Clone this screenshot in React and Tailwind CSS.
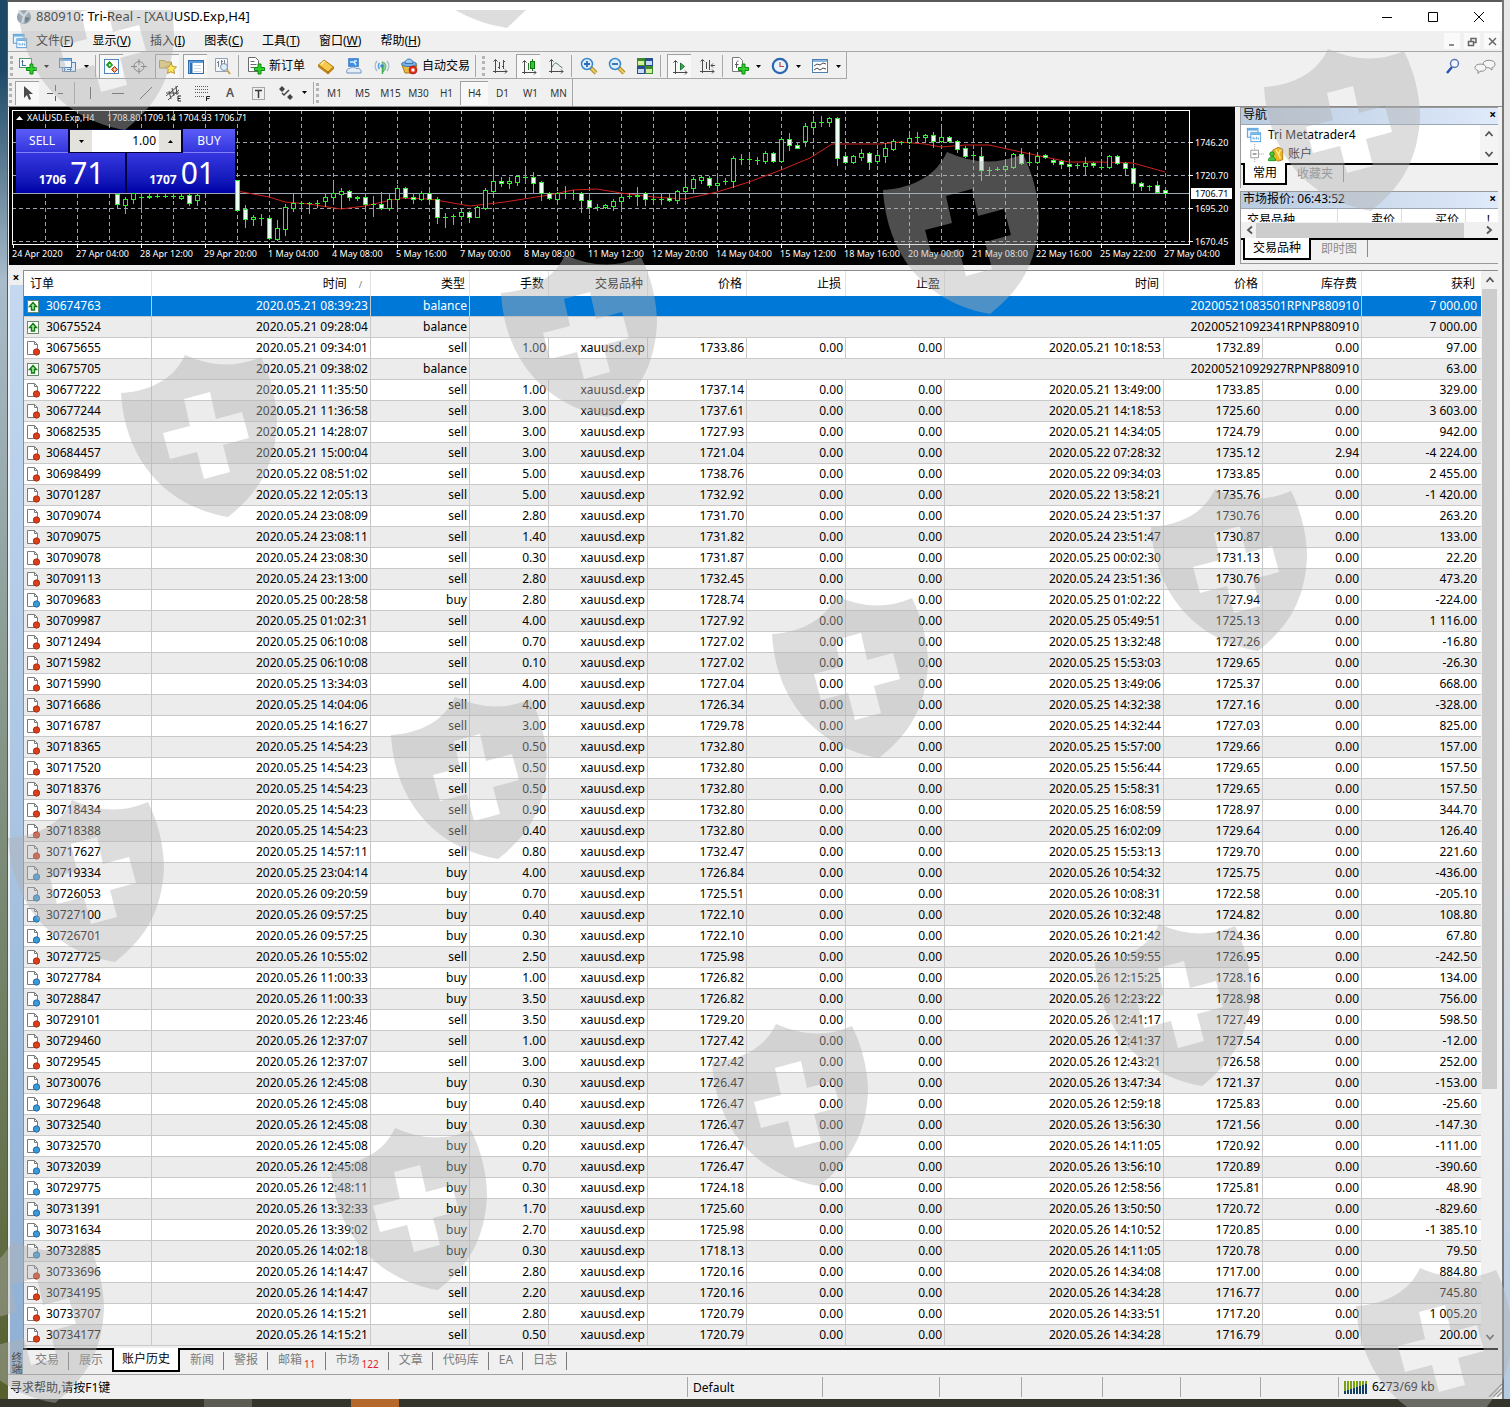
import React, { useState } from 'react';

// order, open time, type, lots, open price, close time (or comment), close price, swap, profit
const HISTORY = [
  ['30674763', '2020.05.21 08:39:23', 'balance', '', '', '20200521083501RPNP880910', '', '', '7 000.00'],
  ['30675524', '2020.05.21 09:28:04', 'balance', '', '', '20200521092341RPNP880910', '', '', '7 000.00'],
  ['30675655', '2020.05.21 09:34:01', 'sell', '1.00', '1733.86', '2020.05.21 10:18:53', '1732.89', '0.00', '97.00'],
  ['30675705', '2020.05.21 09:38:02', 'balance', '', '', '20200521092927RPNP880910', '', '', '63.00'],
  ['30677222', '2020.05.21 11:35:50', 'sell', '1.00', '1737.14', '2020.05.21 13:49:00', '1733.85', '0.00', '329.00'],
  ['30677244', '2020.05.21 11:36:58', 'sell', '3.00', '1737.61', '2020.05.21 14:18:53', '1725.60', '0.00', '3 603.00'],
  ['30682535', '2020.05.21 14:28:07', 'sell', '3.00', '1727.93', '2020.05.21 14:34:05', '1724.79', '0.00', '942.00'],
  ['30684457', '2020.05.21 15:00:04', 'sell', '3.00', '1721.04', '2020.05.22 07:28:32', '1735.12', '2.94', '-4 224.00'],
  ['30698499', '2020.05.22 08:51:02', 'sell', '5.00', '1738.76', '2020.05.22 09:34:03', '1733.85', '0.00', '2 455.00'],
  ['30701287', '2020.05.22 12:05:13', 'sell', '5.00', '1732.92', '2020.05.22 13:58:21', '1735.76', '0.00', '-1 420.00'],
  ['30709074', '2020.05.24 23:08:09', 'sell', '2.80', '1731.70', '2020.05.24 23:51:37', '1730.76', '0.00', '263.20'],
  ['30709075', '2020.05.24 23:08:11', 'sell', '1.40', '1731.82', '2020.05.24 23:51:47', '1730.87', '0.00', '133.00'],
  ['30709078', '2020.05.24 23:08:30', 'sell', '0.30', '1731.87', '2020.05.25 00:02:30', '1731.13', '0.00', '22.20'],
  ['30709113', '2020.05.24 23:13:00', 'sell', '2.80', '1732.45', '2020.05.24 23:51:36', '1730.76', '0.00', '473.20'],
  ['30709683', '2020.05.25 00:28:58', 'buy', '2.80', '1728.74', '2020.05.25 01:02:22', '1727.94', '0.00', '-224.00'],
  ['30709987', '2020.05.25 01:02:31', 'sell', '4.00', '1727.92', '2020.05.25 05:49:51', '1725.13', '0.00', '1 116.00'],
  ['30712494', '2020.05.25 06:10:08', 'sell', '0.70', '1727.02', '2020.05.25 13:32:48', '1727.26', '0.00', '-16.80'],
  ['30715982', '2020.05.25 06:10:08', 'sell', '0.10', '1727.02', '2020.05.25 15:53:03', '1729.65', '0.00', '-26.30'],
  ['30715990', '2020.05.25 13:34:03', 'sell', '4.00', '1727.04', '2020.05.25 13:49:06', '1725.37', '0.00', '668.00'],
  ['30716686', '2020.05.25 14:04:06', 'sell', '4.00', '1726.34', '2020.05.25 14:32:38', '1727.16', '0.00', '-328.00'],
  ['30716787', '2020.05.25 14:16:27', 'sell', '3.00', '1729.78', '2020.05.25 14:32:44', '1727.03', '0.00', '825.00'],
  ['30718365', '2020.05.25 14:54:23', 'sell', '0.50', '1732.80', '2020.05.25 15:57:00', '1729.66', '0.00', '157.00'],
  ['30717520', '2020.05.25 14:54:23', 'sell', '0.50', '1732.80', '2020.05.25 15:56:44', '1729.65', '0.00', '157.50'],
  ['30718376', '2020.05.25 14:54:23', 'sell', '0.50', '1732.80', '2020.05.25 15:58:31', '1729.65', '0.00', '157.50'],
  ['30718434', '2020.05.25 14:54:23', 'sell', '0.90', '1732.80', '2020.05.25 16:08:59', '1728.97', '0.00', '344.70'],
  ['30718388', '2020.05.25 14:54:23', 'sell', '0.40', '1732.80', '2020.05.25 16:02:09', '1729.64', '0.00', '126.40'],
  ['30717627', '2020.05.25 14:57:11', 'sell', '0.80', '1732.47', '2020.05.25 15:53:13', '1729.70', '0.00', '221.60'],
  ['30719334', '2020.05.25 23:04:14', 'buy', '4.00', '1726.84', '2020.05.26 10:54:32', '1725.75', '0.00', '-436.00'],
  ['30726053', '2020.05.26 09:20:59', 'buy', '0.70', '1725.51', '2020.05.26 10:08:31', '1722.58', '0.00', '-205.10'],
  ['30727100', '2020.05.26 09:57:25', 'buy', '0.40', '1722.10', '2020.05.26 10:32:48', '1724.82', '0.00', '108.80'],
  ['30726701', '2020.05.26 09:57:25', 'buy', '0.30', '1722.10', '2020.05.26 10:21:42', '1724.36', '0.00', '67.80'],
  ['30727725', '2020.05.26 10:55:02', 'sell', '2.50', '1725.98', '2020.05.26 10:59:55', '1726.95', '0.00', '-242.50'],
  ['30727784', '2020.05.26 11:00:33', 'buy', '1.00', '1726.82', '2020.05.26 12:15:25', '1728.16', '0.00', '134.00'],
  ['30728847', '2020.05.26 11:00:33', 'buy', '3.50', '1726.82', '2020.05.26 12:23:22', '1728.98', '0.00', '756.00'],
  ['30729101', '2020.05.26 12:23:46', 'sell', '3.50', '1729.20', '2020.05.26 12:41:17', '1727.49', '0.00', '598.50'],
  ['30729460', '2020.05.26 12:37:07', 'sell', '1.00', '1727.42', '2020.05.26 12:41:37', '1727.54', '0.00', '-12.00'],
  ['30729545', '2020.05.26 12:37:07', 'sell', '3.00', '1727.42', '2020.05.26 12:43:21', '1726.58', '0.00', '252.00'],
  ['30730076', '2020.05.26 12:45:08', 'buy', '0.30', '1726.47', '2020.05.26 13:47:34', '1721.37', '0.00', '-153.00'],
  ['30729648', '2020.05.26 12:45:08', 'buy', '0.40', '1726.47', '2020.05.26 12:59:18', '1725.83', '0.00', '-25.60'],
  ['30732540', '2020.05.26 12:45:08', 'buy', '0.30', '1726.47', '2020.05.26 13:56:30', '1721.56', '0.00', '-147.30'],
  ['30732570', '2020.05.26 12:45:08', 'buy', '0.20', '1726.47', '2020.05.26 14:11:05', '1720.92', '0.00', '-111.00'],
  ['30732039', '2020.05.26 12:45:08', 'buy', '0.70', '1726.47', '2020.05.26 13:56:10', '1720.89', '0.00', '-390.60'],
  ['30729775', '2020.05.26 12:48:11', 'buy', '0.30', '1724.18', '2020.05.26 12:58:56', '1725.81', '0.00', '48.90'],
  ['30731391', '2020.05.26 13:32:33', 'buy', '1.70', '1725.60', '2020.05.26 13:50:50', '1720.72', '0.00', '-829.60'],
  ['30731634', '2020.05.26 13:39:02', 'buy', '2.70', '1725.98', '2020.05.26 14:10:52', '1720.85', '0.00', '-1 385.10'],
  ['30732885', '2020.05.26 14:02:18', 'buy', '0.30', '1718.13', '2020.05.26 14:11:05', '1720.78', '0.00', '79.50'],
  ['30733696', '2020.05.26 14:14:47', 'sell', '2.80', '1720.16', '2020.05.26 14:34:08', '1717.00', '0.00', '884.80'],
  ['30734195', '2020.05.26 14:14:47', 'sell', '2.20', '1720.16', '2020.05.26 14:34:28', '1716.77', '0.00', '745.80'],
  ['30733707', '2020.05.26 14:15:21', 'sell', '2.80', '1720.79', '2020.05.26 14:33:51', '1717.20', '0.00', '1 005.20'],
  ['30734177', '2020.05.26 14:15:21', 'sell', '0.50', '1720.79', '2020.05.26 14:34:28', '1716.79', '0.00', '200.00'],
];

// x, high, body top, body bottom, low, falling (1) or rising (0)
const CANDLES = [
  [117, 193, 194, 204, 207, 1], [125, 197, 199, 205, 213, 0], [133, 193, 193, 199, 203, 0], [141, 193, 197, 197, 212, 0],
  [149, 194, 196, 197, 198, 0], [157, 194, 196, 196, 197, 0], [165, 194, 196, 196, 197, 0], [173, 193, 196, 196, 198, 0],
  [181, 194, 196, 198, 199, 0], [189, 194, 195, 203, 205, 1], [197, 193, 195, 200, 205, 0],
  [237, 180, 180, 210, 211, 1], [245, 205, 209, 219, 227, 1], [253, 215, 217, 219, 225, 0], [261, 214, 218, 218, 225, 0],
  [269, 217, 218, 238, 239, 1], [277, 220, 228, 239, 240, 0], [285, 204, 207, 229, 235, 0], [293, 194, 203, 208, 211, 0],
  [301, 201, 203, 203, 207, 0], [309, 202, 203, 203, 213, 0], [317, 200, 203, 203, 207, 0], [325, 193, 197, 201, 206, 0],
  [333, 182, 193, 197, 203, 0], [341, 188, 191, 194, 208, 0], [349, 190, 191, 197, 200, 1], [357, 196, 197, 198, 200, 1],
  [365, 197, 197, 204, 208, 1], [373, 196, 204, 204, 216, 0], [381, 192, 204, 208, 209, 1], [389, 193, 199, 208, 210, 0],
  [397, 185, 188, 199, 208, 0], [405, 187, 188, 197, 198, 1], [413, 193, 197, 199, 203, 1], [421, 191, 193, 199, 200, 0],
  [429, 190, 193, 199, 201, 1], [437, 197, 199, 217, 223, 1], [445, 213, 217, 217, 227, 0], [453, 214, 216, 216, 224, 0],
  [461, 210, 212, 216, 219, 0], [469, 211, 212, 217, 222, 1], [477, 206, 207, 217, 217, 0], [485, 188, 190, 208, 209, 0],
  [493, 170, 181, 191, 192, 0], [501, 177, 181, 183, 186, 1], [509, 177, 181, 183, 188, 0], [517, 175, 176, 182, 185, 0],
  [525, 169, 177, 177, 182, 0], [533, 172, 177, 183, 193, 1], [541, 181, 182, 193, 200, 1], [549, 192, 193, 198, 199, 1],
  [557, 192, 193, 199, 200, 0], [565, 186, 193, 193, 198, 0], [573, 190, 193, 193, 199, 0], [581, 192, 193, 200, 212, 1],
  [589, 193, 200, 207, 213, 1], [597, 204, 207, 207, 210, 0], [605, 204, 205, 207, 208, 0], [613, 199, 201, 206, 210, 0],
  [621, 194, 197, 201, 207, 0], [629, 193, 196, 196, 198, 0], [637, 187, 195, 196, 205, 0], [645, 192, 193, 199, 205, 1],
  [653, 197, 199, 199, 203, 0], [661, 194, 199, 199, 204, 0], [669, 194, 198, 200, 201, 1], [677, 190, 191, 200, 203, 0],
  [685, 176, 187, 191, 199, 0], [693, 177, 179, 188, 193, 0], [701, 176, 177, 180, 183, 0], [709, 176, 178, 185, 187, 1],
  [717, 177, 183, 185, 188, 0], [725, 178, 181, 181, 184, 0], [733, 156, 158, 181, 187, 0], [741, 154, 159, 159, 164, 0],
  [749, 154, 159, 159, 164, 0], [757, 157, 160, 160, 164, 0], [765, 151, 153, 161, 163, 0], [773, 152, 153, 161, 162, 1],
  [781, 137, 139, 161, 162, 0], [789, 133, 139, 145, 150, 1], [797, 143, 145, 148, 148, 1], [805, 123, 126, 141, 146, 0],
  [813, 116, 122, 127, 130, 0], [821, 116, 122, 122, 126, 0], [829, 117, 118, 122, 126, 0], [837, 117, 118, 158, 165, 1],
  [845, 155, 156, 162, 163, 1], [853, 155, 156, 162, 163, 0], [861, 149, 153, 157, 160, 0], [869, 152, 153, 162, 169, 1],
  [877, 150, 155, 161, 163, 0], [885, 143, 148, 156, 162, 0], [893, 139, 141, 149, 150, 0], [901, 141, 142, 142, 144, 0],
  [909, 133, 138, 142, 143, 0], [917, 132, 137, 137, 142, 0], [925, 134, 135, 137, 141, 0], [933, 132, 135, 141, 147, 1],
  [941, 127, 137, 141, 142, 0], [949, 136, 137, 141, 142, 1], [957, 140, 141, 149, 152, 1], [965, 146, 148, 156, 157, 1],
  [973, 151, 155, 155, 160, 0], [981, 147, 156, 170, 180, 1], [989, 167, 170, 170, 175, 0], [997, 167, 169, 169, 170, 0],
  [1005, 163, 166, 169, 171, 0], [1013, 153, 154, 167, 168, 0], [1021, 148, 154, 163, 164, 1], [1029, 152, 162, 162, 165, 0],
  [1037, 152, 156, 162, 163, 0], [1045, 154, 155, 157, 158, 1], [1053, 159, 160, 162, 164, 1], [1061, 160, 161, 164, 168, 1],
  [1069, 163, 164, 166, 171, 1], [1077, 163, 165, 165, 168, 0], [1085, 157, 163, 166, 175, 0], [1093, 162, 163, 165, 167, 1],
  [1101, 162, 167, 167, 169, 0], [1109, 155, 156, 167, 168, 0], [1117, 155, 156, 163, 164, 1], [1125, 162, 163, 168, 175, 1],
  [1133, 164, 168, 183, 189, 1], [1141, 182, 183, 186, 190, 1], [1149, 185, 186, 186, 190, 0], [1157, 181, 185, 192, 193, 1],
  [1165, 189, 190, 193, 197, 1],
];

const AVERAGE =
  '237,191 269,197 285,202 309,204 341,209 365,206 400,198 430,199 470,206 505,202 530,198 549,195 573,190 597,189 621,193 653,197 685,199 717,192 749,182 781,170 810,158 832,144 880,144 900,142 925,144 941,147 965,145 989,145 1021,152 1045,157 1069,162 1100,162 1133,163 1165,172';

const DATES = [
  '24 Apr 2020', '27 Apr 04:00', '28 Apr 12:00', '29 Apr 20:00', '1 May 04:00', '4 May 08:00', '5 May 16:00',
  '7 May 00:00', '8 May 08:00', '11 May 12:00', '12 May 20:00', '14 May 04:00', '15 May 12:00', '18 May 16:00',
  '20 May 00:00', '21 May 08:00', '22 May 16:00', '25 May 22:00', '27 May 04:00',
];

const PRICES = [['1746.20', 142], ['1720.70', 175], ['1695.20', 208], ['1670.45', 241]];

const SHIELDS = [
  [18, 6], [1264, 87], [883, 190], [501, 293], [121, 393], [1151, 527], [772, 634], [391, 735], [8, 838],
  [1095, 962], [712, 1062], [331, 1166], [-52, 1279], [1356, 1306],
];

const MENUS = [['文件', 'F'], ['显示', 'V'], ['插入', 'I'], ['图表', 'C'], ['工具', 'T'], ['窗口', 'W'], ['帮助', 'H']];

const Icon = ({ children, size = 'w-[18px] h-[18px]' }) => (
  <svg viewBox="0 0 18 18" className={`${size} shrink-0`} fill="none" aria-hidden="true">
    {children}
  </svg>
);

const Plus = () => <path d="M11 7h3v3.500h3.500v3H14V17h-3v-3.500H7.500v-3H11z" fill="#2fd02f" stroke="#0b8a0b" />;
const Axes = () => <path d="M4.500 3v13M2.500 4.500l2-2 2 2M2 14.500h14M14 12.500l2 2-2 2" stroke="#4a4a4a" />;

const NewChartIcon = () => (
  <Icon>
    <rect x="0.500" y="1.500" width="12" height="9" fill="#fff" stroke="#4a9a6a" />
    <path d="M3.500 3v6M2.500 4.500l1-1 1 1M3 8.500h4" stroke="#3c6e9c" />
    <Plus />
  </Icon>
);
const ProfilesIcon = () => (
  <Icon>
    <rect x="5.500" y="5.500" width="11" height="9" fill="#dceaf8" stroke="#4a86c0" />
    <rect x="0.500" y="1.500" width="12" height="9" fill="#f4f8fc" stroke="#4a86c0" />
    <path d="M1 3h11" stroke="#7fb0de" strokeWidth="2" />
    <path d="M3.500 11v3.500h8v-3.500M8 12.500h5" stroke="#6b8fb5" />
  </Icon>
);
const MarketIcon = () => (
  <Icon>
    <rect x="1.500" y="1.500" width="14" height="14" fill="#fff" stroke="#4a86c0" />
    <path d="M6.500 3.500L9.500 7 6.500 10 3.500 7z" fill="#20b020" stroke="#0d7a0d" />
    <path d="M11.500 8.500l3 3-3 3-3-3z" fill="#f09040" stroke="#b03010" />
    <path d="M6 6h1.500v2H6z" fill="#e0ffe0" />
    <path d="M11 10.500h1.500v2H11z" fill="#fff0e0" />
  </Icon>
);
const TargetIcon = () => (
  <Icon>
    <circle cx="9" cy="9.500" r="5" stroke="#707070" />
    <path d="M9 2v6M9 11v6M1 9.500h6M11 9.500h6" stroke="#707070" />
  </Icon>
);
const StarsIcon = () => (
  <Icon>
    <path d="M.5 2.500h5l1 1.500h6v6h-12z" fill="#f3d878" stroke="#b8942c" />
    <path d="M12 5l1.700 3.500 3.800.5-2.700 2.700.7 3.800-3.500-1.800-3.500 1.800.7-3.800L6.500 9l3.800-.5z" fill="#ffe65a" stroke="#b8942c" />
  </Icon>
);
const TerminalIcon = () => (
  <Icon>
    <rect x="1.500" y="2.500" width="15" height="13" fill="#fff" stroke="#2f6db0" />
    <path d="M2 4h14" stroke="#5d9ad8" strokeWidth="2" />
    <path d="M4 5v10" stroke="#2f6db0" strokeWidth="3" />
    <path d="M7 7.500h7M7 10.500h7M7 13.500h7" stroke="#c9d9ea" />
  </Icon>
);
const TesterIcon = () => (
  <Icon>
    <path d="M1.500 1.500h12v13h-12z" fill="#f7f7f7" stroke="#8ea3b8" />
    <path d="M4.500 4v6M3 5.500h1.500M7.500 3v6M7.500 4.500H9M10.500 3v5" stroke="#6d7f90" />
    <circle cx="10" cy="10" r="3.500" fill="#d8ebfa" fillOpacity="0.8" stroke="#7a94ad" />
    <path d="M13 13l3 4" stroke="#d1a23c" strokeWidth="2" />
  </Icon>
);
const OrderIcon = () => (
  <Icon>
    <path d="M1.500 .500h7l3 3v11h-10z" fill="#fff" stroke="#6a6a6a" />
    <path d="M3.500 4.500h4M3.500 7.500h6M3.500 10.500h4" stroke="#6a6a6a" />
    <Plus />
  </Icon>
);
const GoldIcon = () => (
  <Icon>
    <path d="M1.500 8L7 3l9.500 7-5.500 5z" fill="#f6c94c" stroke="#b27a10" />
    <path d="M1.500 8v2L11 17v-2zM11 15v2l5.500-5v-2z" fill="#c78a1a" stroke="#a66b0c" strokeWidth="0.600" />
    <path d="M4 7.500l3.500-3.500" stroke="#fff0a8" strokeWidth="1.500" />
  </Icon>
);
const ComputerIcon = () => (
  <Icon>
    <path d="M3.500 1.500h10v8h-10z" fill="#3b8ee8" stroke="#5b8fc8" />
    <path d="M5 5h4l2 3M9 4h3" stroke="#d8efff" strokeWidth="1.500" />
    <path d="M2 16c-1-3 1-5 3-4.500 1-2 5-2 6 0 3-1 6 1.500 5 4.500z" fill="#e4ecf5" stroke="#6f94bf" />
  </Icon>
);
const SignalIcon = () => (
  <Icon>
    <path d="M4 4a8 8 0 0 0 0 10M14 4a8 8 0 0 1 0 10" stroke="#a7bfc8" strokeWidth="1.500" />
    <path d="M6.500 6a5 5 0 0 0 0 6" stroke="#5a9be0" strokeWidth="1.500" />
    <path d="M9 5c5 0 5 7 1 10V9z" fill="#8fd09a" stroke="#5fae6b" />
    <circle cx="9" cy="9" r="1.800" fill="#2f8ed0" />
    <path d="M9.500 10v7" stroke="#3fae4b" strokeWidth="1.500" />
  </Icon>
);
const AutoIcon = () => (
  <Icon>
    <path d="M2 8l3 8h8l4-8z" fill="#e8b93c" stroke="#a67c15" />
    <ellipse cx="9" cy="7" rx="7.500" ry="2.500" fill="#7ab4ea" stroke="#3c78b4" />
    <path d="M5 6.500c0-6 8-6 8 0z" fill="#9fcbf2" stroke="#3c78b4" />
    <circle cx="13" cy="13" r="4" fill="#dd2c1c" stroke="#a01508" strokeWidth="0.600" />
    <rect x="11.500" y="11.500" width="3" height="3" fill="#fff" />
  </Icon>
);
const BarsIcon = () => (
  <Icon><Axes /><path d="M8.500 5v7M7 10.500h1.500M12.500 3v9M12.500 4.500H14M11 9.500h1.500" stroke="#4a4a4a" /></Icon>
);
const CandleIcon = () => (
  <Icon>
    <Axes />
    <path d="M8.500 5v7M12.500 1v12" stroke="#2c7a2c" />
    <rect x="10.500" y="3.500" width="4" height="7" fill="#35c635" stroke="#0d7a0d" />
  </Icon>
);
const LineIcon = () => (
  <Icon><Axes /><path d="M4.500 11c3-6 5-6 7-3l4 3" stroke="#4a7a5a" /></Icon>
);
const ZoomIcon = ({ plus }) => (
  <Icon>
    <path d="M11 11l5 5" stroke="#b48a24" strokeWidth="4" />
    <path d="M11 11l5 5" stroke="#e9cf6c" strokeWidth="2" />
    <circle cx="7" cy="7" r="5.500" fill="#d9edfb" stroke="#3a86cc" strokeWidth="1.500" />
    <path d={plus ? 'M4 7h6M7 4v6' : 'M4 7h6'} stroke="#2a6db4" strokeWidth="1.800" />
  </Icon>
);
const TileIcon = () => (
  <Icon>
    <rect x="1" y="1" width="8" height="8" fill="#3c8a2c" /><rect x="9" y="1" width="8" height="8" fill="#2a4c90" />
    <rect x="1" y="9" width="8" height="8" fill="#2a4c90" /><rect x="9" y="9" width="8" height="8" fill="#3c8a2c" />
    <path d="M2 4h6v4H2zM10 12h6v4h-6z" fill="#d4eeA0" />
    <path d="M10 4h6v4h-6zM2 12h6v4H2z" fill="#c4dcf8" />
  </Icon>
);
const ScrollIcon = () => <Icon><Axes /><path d="M9.500 5v7l4-3.500z" fill="#2fae4f" stroke="#1e7a36" /></Icon>;
const ShiftIcon = () => <Icon><Axes /><path d="M11.500 3v10M17 8.500h-4M15 6.500l-2 2 2 2M8.500 5v7" stroke="#4a4a4a" /></Icon>;
const IndicatorIcon = () => (
  <Icon>
    <path d="M1.500 .500h7l3 3v11h-10z" fill="#fff" stroke="#7a7a7a" />
    <path d="M7.500 4c-2 0-2 1-2 3v4M4 7.500h3.500" stroke="#5a5a5a" />
    <Plus />
  </Icon>
);
const ClockIcon = () => (
  <Icon>
    <circle cx="9" cy="9" r="7.200" fill="#e9f4fd" stroke="#2a67b0" strokeWidth="2.200" />
    <path d="M9 5v4.500h4" stroke="#c04a3a" strokeWidth="1.200" />
  </Icon>
);
const TemplateIcon = () => (
  <Icon>
    <rect x="1.500" y="2.500" width="15" height="13" fill="#fff" stroke="#4a7fb0" />
    <path d="M2 4h14" stroke="#8ab4de" strokeWidth="2" />
    <path d="M3 9l3-2 3 1 3-2 3 1M3 13l3-2 3 2 3-2 3 1" stroke="#4a4a4a" />
  </Icon>
);
const WindowsIcon = () => (
  <Icon size="w-4 h-4">
    <rect x="1.500" y="1.500" width="12" height="10" fill="#e8f3fc" stroke="#4a96d4" />
    <path d="M2 3h11" stroke="#6ab0e4" strokeWidth="2" />
    <rect x="5.500" y="6.500" width="11" height="10" fill="#fff" stroke="#4a96d4" />
    <path d="M6 8h10" stroke="#6ab0e4" strokeWidth="2" />
    <path d="M8 14v-3M10 14v-2M12 14v-3M14 14v-2" stroke="#4a96d4" />
  </Icon>
);

const DocIcon = ({ type }) => {
  if (type === 'balance') {
    return (
      <svg viewBox="0 0 14 16" className="w-[14px] h-4 shrink-0" fill="none" aria-hidden="true">
        <rect x="1.500" y="2.500" width="11" height="12" fill="#fff" stroke="#6a8a6a" />
        <path d="M7 4.500l3.500 4h-2V12h-3V8.500h-2z" fill="#a8e8a0" stroke="#127a12" strokeWidth="1.400" />
      </svg>
    );
  }
  return (
    <svg viewBox="0 0 14 16" className="w-[14px] h-4 shrink-0" fill="none" aria-hidden="true">
      <path d="M1.500 1.500h7l3 3v10h-10z" fill="#fff" stroke="#7a7a7a" />
      <path d="M8.500 1.500v3h3" stroke="#7a7a7a" />
      <circle cx="10.500" cy="12" r="3.200" fill={type === 'sell' ? '#d8401c' : '#3a9ad8'} stroke={type === 'sell' ? '#9c2408' : '#1a5c94'} strokeWidth="0.800" />
    </svg>
  );
};

const ToolButton = ({ label, active, children }) => (
  <button type="button" aria-label={label} className="flex w-7 h-6 items-center justify-center">
    <span className={`flex w-6 h-6 items-center justify-center ${active ? 'border-t border-l border-[#a0a0a0] bg-[#f8f8f8]' : ''}`}>
      {children}
    </span>
  </button>
);

const Caret = ({ label }) => (
  <button type="button" aria-label={label} className="flex w-2 h-6 items-center justify-center">
    <svg viewBox="0 0 5 3" className="w-[5px] h-[3px]" aria-hidden="true"><path d="M0 0h5L2.500 3z" fill="#000" /></svg>
  </button>
);

const Sep = () => <span className="w-px h-[22px] mx-px bg-[#a8a8a8]" />;
const Grip = () => <span className="w-[3px] h-5 mx-px border-l-[3px] border-dotted border-[#b4b4b4]" />;

const Toolbar = () => (
  <div className="flex h-[27px]">
    <div className="flex items-center pt-0.5 pl-px pr-1 border-r border-b border-[#a8a8a8]">
      <Grip />
      <ToolButton label="新图表"><NewChartIcon /></ToolButton>
      <Caret label="新图表列表" />
      <span className="w-1" />
      <ToolButton label="配置文件"><ProfilesIcon /></ToolButton>
      <Caret label="配置文件列表" />
      <span className="w-1" />
      <Sep />
      <ToolButton label="市场报价" active><MarketIcon /></ToolButton>
      <ToolButton label="数据窗口"><TargetIcon /></ToolButton>
      <ToolButton label="导航" active><StarsIcon /></ToolButton>
      <ToolButton label="终端" active><TerminalIcon /></ToolButton>
      <ToolButton label="策略测试"><TesterIcon /></ToolButton>
      <Sep />
      <button type="button" className="flex items-center gap-1 px-[7px] text-[12px]"><OrderIcon />新订单</button>
      <ToolButton label="编辑器"><GoldIcon /></ToolButton>
      <ToolButton label="主机"><ComputerIcon /></ToolButton>
      <ToolButton label="信号"><SignalIcon /></ToolButton>
      <button type="button" className="flex items-center gap-1 px-1 text-[12px]"><AutoIcon />自动交易</button>
      <Sep />
      <span className="w-1" />
      <Grip />
      <ToolButton label="柱状图"><BarsIcon /></ToolButton>
      <ToolButton label="蜡烛图" active><CandleIcon /></ToolButton>
      <ToolButton label="折线图"><LineIcon /></ToolButton>
      <Sep />
      <span className="w-0.5" />
      <ToolButton label="放大"><ZoomIcon plus /></ToolButton>
      <ToolButton label="缩小"><ZoomIcon /></ToolButton>
      <ToolButton label="平铺"><TileIcon /></ToolButton>
      <Sep />
      <span className="w-[3px]" />
      <ToolButton label="自动滚动" active><ScrollIcon /></ToolButton>
      <ToolButton label="图表平移"><ShiftIcon /></ToolButton>
      <Sep />
      <span className="w-0.5" />
      <ToolButton label="指标"><IndicatorIcon /></ToolButton>
      <Caret label="指标列表" />
      <span className="w-1" />
      <ToolButton label="周期"><ClockIcon /></ToolButton>
      <Caret label="周期列表" />
      <span className="w-1" />
      <ToolButton label="模板"><TemplateIcon /></ToolButton>
      <Caret label="模板列表" />
    </div>
    <div className="ml-auto flex items-center gap-3 pr-1.5">
      <button type="button" aria-label="搜索">
        <Icon>
          <path d="M8 10l-5 6" stroke="#2c52b0" strokeWidth="2.500" />
          <circle cx="10.500" cy="6.500" r="4" fill="#f2f6fc" stroke="#5a78b8" strokeWidth="1.500" />
        </Icon>
      </button>
      <button type="button" aria-label="聊天">
        <svg viewBox="0 0 22 18" className="w-[22px] h-[18px]" fill="none" aria-hidden="true">
          <path d="M9 7c0-5 12-5 12 0 0 2-1 3-3 3.500V13l-3-2.300C11 11 9 9.500 9 7z" fill="#f4f4f4" stroke="#8c8c8c" />
          <path d="M1 10.500c0-4.500 11-4.500 11 0 0 3-3 4-6 3.700L4 16.500v-3c-2-.6-3-1.600-3-3z" fill="#f4f4f4" stroke="#8c8c8c" />
        </svg>
      </button>
    </div>
  </div>
);

const DrawingBar = () => {
  const [frame, setFrame] = useState('H4');
  return (
    <div className="flex h-7 border-b border-[#8c8c8c]">
      <div className="flex items-center border-r border-[#a8a8a8]">
        <Grip />
        <ToolButton label="光标" active><Icon><path d="M5 2v12l3-3 2 5 2-1-2-5h4z" fill="#4a4a4a" /></Icon></ToolButton>
        <ToolButton label="十字线"><Icon><path d="M9.500 1v6M9.500 12v5M1 9.500h6M12 9.500h5" stroke="#5a5a5a" /></Icon></ToolButton>
        <span className="w-1" />
        <Sep />
        <ToolButton label="垂直线"><Icon><path d="M9.500 3v12" stroke="#5a5a5a" /></Icon></ToolButton>
        <ToolButton label="水平线"><Icon><path d="M3 9.500h12" stroke="#5a5a5a" /></Icon></ToolButton>
        <ToolButton label="趋势线"><Icon><path d="M3 15L15 3" stroke="#5a5a5a" /></Icon></ToolButton>
        <ToolButton label="通道">
          <Icon>
            <path d="M1 12L13 2M3 16L14 6M4 7l2 8M7 4l2 8M11 2l1 9M1 9h13" stroke="#4a4a4a" />
            <path d="M16 12h-3v5h3M13 14.500h2.500" stroke="#222" />
          </Icon>
        </ToolButton>
        <ToolButton label="斐波那契">
          <Icon>
            <path d="M2 2.500h13M2 5.500h13M2 8.500h13M2 12.500h10" stroke="#5a5a5a" strokeDasharray="1 1" />
            <path d="M17 12.500h-3.500V17M14 14.500h2.500" stroke="#222" />
          </Icon>
        </ToolButton>
        <ToolButton label="文字"><span className="text-[12px] font-semibold text-[#555]">A</span></ToolButton>
        <ToolButton label="标签">
          <Icon>
            <rect x="3.500" y="3.500" width="12" height="12" stroke="#5a5a5a" strokeDasharray="1 1" />
            <path d="M6 6.500h7M9.500 6.500V14" stroke="#3a3a3a" strokeWidth="1.500" />
          </Icon>
        </ToolButton>
        <ToolButton label="箭头">
          <Icon>
            <path d="M2 5l3-3 3 3-3 3zM10 13l3-3 3 3-3 3z" fill="#444" />
            <path d="M5 9l2 2 5-5" stroke="#444" strokeWidth="1.500" />
          </Icon>
        </ToolButton>
        <Caret label="箭头列表" />
        <span className="w-1" />
        <Sep />
        <Grip />
        {['M1', 'M5', 'M15', 'M30', 'H1', 'H4', 'D1', 'W1', 'MN'].map((f) => (
          <button
            key={f}
            type="button"
            onClick={() => setFrame(f)}
            className={`w-7 h-6 border-t border-l text-center text-[10px] text-[#333] ${f === frame ? 'border-[#a0a0a0] bg-[#f8f8f8]' : 'border-transparent'}`}
          >
            {f}
          </button>
        ))}
      </div>
    </div>
  );
};

const Chart = () => (
  <svg viewBox="9 107 1226 158" className="block w-full h-auto bg-black" fill="none">
    <g stroke="#9aa3ad" strokeDasharray="4 3" shapeRendering="crispEdges">
      {Array.from({ length: 36 }, (_, i) => (
        <path key={i} d={`M${45.5 + i * 32} 110V244`} />
      ))}
      {PRICES.map(([p, y]) => (
        <path key={p} d={`M12 ${y + 0.5}H1189`} />
      ))}
    </g>
    <path d="M12 193.500H1189" stroke="#9aa9b8" />
    <polyline points={AVERAGE} stroke="#d0221e" />
    <g shapeRendering="crispEdges">
      {CANDLES.map(([x, high, top, bottom, low, down]) => (
        <g key={x}>
          <path d={`M${x + 0.5} ${high}V${low + 1}`} stroke="#2cf02c" />
          {top === bottom ? (
            <path d={`M${x - 2} ${top + 0.5}h5`} stroke="#2cf02c" />
          ) : (
            <rect x={x - 1.5} y={top + 0.5} width="4" height={bottom - top} fill={down ? '#eafff0' : '#000'} stroke="#2cf02c" />
          )}
        </g>
      ))}
      <path d="M12.500 110.500H1189.500V244.500H12.500z" stroke="#fff" />
      {PRICES.map(([p, y]) => (
        <path key={p} d={`M1189 ${y + 0.5}h4`} stroke="#fff" />
      ))}
      {DATES.map((d, i) => (
        <path key={d} d={`M${13.5 + i * 64} 244v4`} stroke="#fff" />
      ))}
    </g>
    <g fill="#fff" className="text-[9px]">
      {DATES.map((d, i) => (
        <text key={d} x={12 + i * 64} y="257">{d}</text>
      ))}
      {PRICES.map(([p, y]) => (
        <text key={p} x="1195" y={y + 4}>{p}</text>
      ))}
      <path d="M16 120l3.500-4 3.500 4z" />
      <text x="27" y="121">XAUUSD.Exp,H4</text>
      <text x="107" y="121">1708.80 1709.14 1704.93 1706.71</text>
      <rect x="1191" y="188" width="41" height="11" />
      <text x="1195" y="197" fill="#000">1706.71</text>
    </g>
  </svg>
);

const OneClick = () => (
  <div className="absolute left-[7px] top-[22px] flex w-[219px] flex-col bg-[#00003c] text-white">
    <div className="flex justify-between">
      <button type="button" className="w-[52px] h-6 border-b border-[#8080ff] bg-linear-to-b from-[#5c5cf8] to-[#3434dc] text-[12px]">SELL</button>
      <div className="flex h-[22px] w-[111px] mt-px bg-[#e4e2dc] text-black">
        <button type="button" aria-label="减少手数" className="flex w-[22px] items-center justify-center">
          <svg viewBox="0 0 5 3" className="w-[5px] h-[3px]"><path d="M0 0h5L2.500 3z" fill="#000" /></svg>
        </button>
        <input aria-label="手数" defaultValue="1.00" className="w-0 flex-1 bg-white px-[3px] text-right text-[12px]" />
        <button type="button" aria-label="增加手数" className="flex w-[22px] items-center justify-center">
          <svg viewBox="0 0 5 3" className="w-[5px] h-[3px]"><path d="M0 3h5L2.500 0z" fill="#000" /></svg>
        </button>
      </div>
      <button type="button" className="w-[52px] h-6 border-b border-[#8080ff] bg-linear-to-b from-[#5c5cf8] to-[#3434dc] text-[12px]">BUY</button>
    </div>
    <div className="grid grid-cols-2 gap-0.5">
      {[['1706', '71'], ['1707', '01']].map(([big, pips]) => (
        <button key={big} type="button" className="flex h-10 items-baseline justify-end gap-1 bg-linear-to-b from-[#3636e0] to-[#0000a8] pr-5">
          <span className="text-[12px] font-bold">{big}</span>
          <span className="text-[30px] leading-10">{pips}</span>
        </button>
      ))}
    </div>
  </div>
);

const Chevron = ({ d }) => (
  <svg viewBox="0 0 10 10" className="w-[10px] h-[10px]" fill="none" aria-hidden="true"><path d={d} stroke="#555" strokeWidth="1.800" /></svg>
);
const UP = 'M1.500 7L5 3l3.500 4';
const DOWN = 'M1.500 3L5 7l3.500-4';

const PanelTitle = ({ children }) => (
  <div className="flex h-[17px] items-center justify-between border-b border-[#9aa6b4] bg-linear-to-r from-[#b9cbe0] to-[#dfeafa] pb-0.5 pl-0.5 pr-0.5 text-[12px]">
    <span>{children}</span>
    <button type="button" aria-label="关闭" className="text-[12px] font-bold leading-4">×</button>
  </div>
);

const PanelTabs = ({ active, other }) => (
  <div className="flex h-[25px] border-t-2 border-black bg-[#f0f0f0] pl-0.5 text-[12px]">
    <button type="button" className="h-[22px] -mt-0.5 border-x-2 border-b-2 border-black bg-white px-2">{active}</button>
    <button type="button" className="mb-1.5 border-r border-[#8a8a8a] px-[10px] leading-4 text-[#8c8c8c]">{other}</button>
  </div>
);

const SidePanels = () => (
  <div className="flex w-[258px] shrink-0 flex-col">
    <section className="border border-r-0 border-b-0 border-[#9a9a9a]">
      <PanelTitle>导航</PanelTitle>
      <div className="flex h-[38px] justify-between bg-white">
        <ul className="text-[12px] leading-[19px]">
          <li className="flex h-[19px] items-center gap-1.5 pl-[5px]"><WindowsIcon />Tri Metatrader4</li>
          <li className="flex h-[19px] items-center gap-1 pl-[9px]">
            <svg viewBox="0 0 14 20" className="w-[14px] h-[19px]" fill="none" aria-hidden="true">
              <path d="M4.500 0v20M9 10.500h5" stroke="#999" strokeDasharray="1 1" />
              <path d="M.5 6.500h8v8h-8z" fill="#fff" stroke="#999" />
              <path d="M2.500 10.500h4" stroke="#444" />
            </svg>
            <Icon size="w-4 h-4">
              <path d="M5.500 4.500l6-3 5 2v12l-5 1.500-6-3z" fill="#f0b820" stroke="#a87410" />
              <path d="M9 4l5 10M14 4l-2 5" stroke="#fff0a0" strokeWidth="1.500" />
              <circle cx="4.500" cy="9" r="2.500" fill="#4cc83c" stroke="#1e8a18" />
              <path d="M.5 16.500c0-6 8-6 8 0z" fill="#4cc83c" stroke="#1e8a18" />
            </Icon>
            账户
          </li>
        </ul>
        <div className="flex w-[18px] flex-col items-center justify-between bg-[#f4f4f4] py-1">
          <Chevron d={UP} />
          <Chevron d={DOWN} />
        </div>
      </div>
      <PanelTabs active="常用" other="收藏夹" />
    </section>
    <section className="mt-[3px] border border-r-0 border-[#9a9a9a]">
      <PanelTitle>市场报价: 06:43:52</PanelTitle>
      <div className="flex h-[13px] items-start overflow-hidden bg-white text-[12px] leading-[22px]">
        <span className="w-[97px] border-r border-[#ddd] pl-1.5">交易品种</span>
        <span className="w-16 border-r border-[#ddd] pr-1.5 text-right">卖价</span>
        <span className="w-16 border-r border-[#ddd] pr-1.5 text-right">买价</span>
        <span className="flex-1 pr-2 text-right">!</span>
      </div>
      <div className="flex h-4 items-center justify-between bg-[#f0f0f0] px-1">
        <Chevron d="M7 1.500L3 5l4 3.500" />
        <span className="h-[15px] w-[208px] -ml-5 bg-[#cdcdcd]" />
        <Chevron d="M3 1.500L7 5l-4 3.500" />
      </div>
      <PanelTabs active="交易品种" other="即时图" />
    </section>
  </div>
);

const cell = 'h-[21px] overflow-hidden whitespace-nowrap border-b border-[#c9c9c9] p-0 leading-5';
const num = `${cell} border-r pr-0.5 text-right`;

const HistoryTable = () => {
  const [selected, setSelected] = useState('30674763');
  const head = 'h-[25px] border-r border-[#e2e2e2] p-0 pr-1 text-right font-normal';
  return (
    <table className="w-full table-fixed border-separate border-spacing-0 text-[12px]">
      <colgroup>
        <col className="w-[128px]" /><col className="w-[219px]" /><col className="w-[99px]" /><col className="w-[79px]" />
        <col className="w-[99px]" /><col className="w-[99px]" /><col className="w-[99px]" /><col className="w-[99px]" />
        <col className="w-[219px]" /><col className="w-[99px]" /><col className="w-[99px]" /><col className="w-[119px]" />
      </colgroup>
      <thead className="bg-white">
        <tr>
          <th className="h-[25px] border-r border-[#e2e2e2] p-0 pl-1.5 text-left font-normal">订单</th>
          <th className={head}>时间<span className="ml-3 mr-1 text-[9px] text-[#777]">/</span></th>
          <th className={head}>类型</th>
          <th className={head}>手数</th>
          <th className={head}>交易品种</th>
          <th className={head}>价格</th>
          <th className={head}>止损</th>
          <th className={head}>止盈</th>
          <th className={head}>时间</th>
          <th className={head}>价格</th>
          <th className={head}>库存费</th>
          <th className="h-[25px] p-0 pr-1.5 text-right font-normal">获利</th>
        </tr>
      </thead>
      <tbody>
        {HISTORY.map(([id, opened, type, lots, price, closed, closePrice, swap, profit]) => (
          <tr
            key={id}
            onClick={() => setSelected(id)}
            className={id === selected ? 'bg-[#0078d7] text-white' : 'odd:bg-white even:bg-[#ececec]'}
          >
            <td className={`${cell} border-r`}>
              <span className="flex items-center gap-1.5 pl-0.5"><DocIcon type={type} />{id}</span>
            </td>
            <td className={num}>{opened}</td>
            <td className={num}>{type}</td>
            {type === 'balance' ? (
              <td className={num} colSpan={8}>{closed}</td>
            ) : (
              <>
                <td className={num}>{lots}</td>
                <td className={num}>xauusd.exp</td>
                <td className={num}>{price}</td>
                <td className={num}>0.00</td>
                <td className={num}>0.00</td>
                <td className={num}>{closed}</td>
                <td className={num}>{closePrice}</td>
                <td className={num}>{swap}</td>
              </>
            )}
            <td className={`${cell} pr-1 text-right`}>{profit}</td>
          </tr>
        ))}
      </tbody>
    </table>
  );
};

const TABS = [['交易'], ['展示'], ['账户历史'], ['新闻'], ['警报'], ['邮箱', '11'], ['市场', '122'], ['文章'], ['代码库'], ['EA'], ['日志']];

const Terminal = () => {
  const [tab, setTab] = useState('账户历史');
  return (
    <section className="flex pl-px pr-1">
      <div className="flex w-[14px] shrink-0 flex-col items-center">
        <button type="button" aria-label="关闭终端" className="h-[15px] text-[12px] font-bold leading-3">×</button>
        <div className="flex w-[13px] flex-1 items-end justify-center bg-linear-to-b from-[#c4d8f0] to-[#8fb0d4] text-[11px] leading-3">
          <span className="[writing-mode:vertical-rl]">终端</span>
        </div>
      </div>
      <div className="min-w-0 flex-1">
        <div className="flex border-t border-l border-[#8c8c8c] pb-0.5">
          <div className="min-w-0 flex-1"><HistoryTable /></div>
          <div className="flex w-[17px] shrink-0 flex-col items-center bg-[#f0f0f0]">
            <span className="flex h-[18px] items-center"><Chevron d={UP} /></span>
            <div className="w-[15px] flex-1"><div className="h-[77%] bg-[#cdcdcd]" /></div>
            <span className="flex h-[18px] items-center"><Chevron d={DOWN} /></span>
          </div>
        </div>
        <div className="flex h-[26px] border-t-2 border-black pl-0.5 text-[12px]">
          {TABS.map(([name, count], i) =>
            name === tab ? (
              <button key={name} type="button" className="h-6 -mt-0.5 border-x-2 border-b-2 border-black bg-white px-2">{name}</button>
            ) : (
              <button
                key={name}
                type="button"
                onClick={() => setTab(name)}
                className={`mt-0.5 mb-1 flex pl-[10px] pr-[9px] leading-[15px] text-[#7c7c7c] ${TABS[i + 1]?.[0] === tab ? '' : 'border-r border-[#7c7c7c]'}`}
              >
                {name}
                {count && <span className="pt-1.5 pl-0.5 text-[10px] leading-3 text-[#e02030]">{count}</span>}
              </button>
            ),
          )}
        </div>
      </div>
    </section>
  );
};

const StatusBar = () => (
  <footer className="flex h-[25px] items-stretch border-t border-[#a0a0a0] text-[12px] leading-[26px]">
    <span className="flex-1 pl-0.5">寻求帮助,请按F1键</span>
    <span className="w-[135px] my-0.5 border-l border-[#a8a8a8] pl-[5px] leading-[22px]">Default</span>
    <span className="w-[117px] my-0.5 border-l border-[#a8a8a8]" />
    <span className="w-[82px] my-0.5 border-l border-[#a8a8a8]" />
    <span className="w-[81px] my-0.5 border-l border-[#a8a8a8]" />
    <span className="w-[78px] my-0.5 border-l border-[#a8a8a8]" />
    <span className="w-[80px] my-0.5 border-l border-[#a8a8a8]" />
    <span className="w-[78px] my-0.5 border-l border-[#a8a8a8]" />
    <span className="flex w-[164px] my-0.5 items-center gap-1 border-l border-[#a8a8a8] pl-[5px] leading-5">
      <svg viewBox="0 0 24 14" className="w-6 h-[14px]" aria-hidden="true">
        {Array.from({ length: 8 }, (_, i) => (
          <g key={i}>
            <rect x={i * 3} y="1" width="2" height={10 - i} fill="#7aa014" />
            <rect x={i * 3} y={11 - i} width="2" height={3 + i} fill="#123f66" />
          </g>
        ))}
      </svg>
      6273/69 kb
      <svg viewBox="0 0 14 14" className="ml-auto self-end w-[14px] h-[14px]" aria-hidden="true">
        <path d="M1 14L14 1M5 14l9-9M9 14l5-5" stroke="#9a9a9a" strokeWidth="1.500" />
      </svg>
    </span>
  </footer>
);

const ShieldMarks = () => (
  <svg viewBox="0 0 1510 1407" className="pointer-events-none absolute inset-x-0 top-0 w-full" aria-hidden="true">
    <defs>
      <path
        id="shield"
        fillRule="evenodd"
        d="M0 0C32-2 54-16 64-38Q104-20 140-36C150-16 156 8 156 30C154 70 140 98 107 124C48 114 4 70 0 0ZM63 6L89-1L95 26L121 19L128 45L102 52L109 79L83 86L76 59L49 66L42 40L69 33Z"
      />
      <clipPath id="below"><rect y="10" width="1510" height="1397" /></clipPath>
    </defs>
    <g fill="#b1b1b1" fillOpacity="0.44" clipPath="url(#below)">
      {SHIELDS.map(([x, y]) => (
        <use key={`${x}-${y}`} href="#shield" x={x} y={y} />
      ))}
      <path d="M455 10H526L507 28Q480 24 455 10Z" />
    </g>
  </svg>
);

const App = () => (
  <div className="relative flex min-h-screen flex-col overflow-hidden bg-[#35352c] font-['Noto_Sans','Noto_Sans_CJK_SC',sans-serif] text-black">
    <div className="flex">
      <div className="w-2 shrink-0 border-r border-[#556] bg-linear-to-b from-[#1c4a66] from-5% via-[#a9bccb] via-20% to-[#55602c]" />
      <main className="min-w-0 flex-1 border-t-2 border-[#5a5a5a] bg-[#f0f0f0]">
        <header className="flex h-[29px] items-center bg-white pl-2 text-[13px]">
          <Icon size="w-4 h-4">
            <circle cx="9" cy="9" r="8" fill="#8ea4b4" />
            <path d="M3 3l6 5 5-6M9 8l-2 8" stroke="#eef3f6" strokeWidth="2.500" />
            <path d="M10 9l6 1-5 6z" fill="#3c5a70" />
          </Icon>
          <h1 className="pl-1">880910: Tri-Real - [XAUUSD.Exp,H4]</h1>
          <div className="ml-auto flex">
            {[['最小化', 'M1 6.500h10'], ['最大化', 'M1.500 1.500h9v9h-9z'], ['关闭', 'M1 1l10 10M11 1L1 11']].map(([name, d]) => (
              <button key={name} type="button" aria-label={name} className="flex w-[46px] h-7 items-center justify-center">
                <svg viewBox="0 0 12 12" className="w-3 h-3" fill="none"><path d={d} stroke="#000" /></svg>
              </button>
            ))}
          </div>
        </header>
        <nav className="flex h-[21px] items-center border-b border-[#a8a8a8] pl-1 text-[12px]">
          <WindowsIcon />
          <ul className="flex gap-[19px] pl-2">
            {MENUS.map(([name, key]) => (
              <li key={key}><button type="button">{name}(<u>{key}</u>)</button></li>
            ))}
          </ul>
          <div className="ml-auto flex gap-1 pr-0.5">
            {[['最小化图表', 'M2 9h5'], ['还原图表', 'M1.500 5.500h5v4h-5zM4 5V2.500h5v4H7'], ['关闭图表', 'M2 2l7 7M9 2L2 9']].map(([name, d]) => (
              <button key={name} type="button" aria-label={name} className="flex w-4 h-4 items-center justify-center bg-[#fafafa]">
                <svg viewBox="0 0 11 11" className="w-[11px] h-[11px]" fill="none"><path d={d} stroke="#666" strokeWidth="1.500" /></svg>
              </button>
            ))}
          </div>
        </nav>
        <Toolbar />
        <DrawingBar />
        <div className="flex gap-[5px] pl-px pr-1">
          <div className="relative min-w-0 flex-1">
            <Chart />
            <OneClick />
          </div>
          <SidePanels />
        </div>
        <div className="h-[5px]" />
        <Terminal />
        <StatusBar />
      </main>
      <div className="w-2 shrink-0 border-l-2 border-[#777] bg-linear-to-b from-[#e8e8e8] via-[#dcdcdc] via-60% to-[#b4cbe2]" />
    </div>
    <div className="flex h-2 w-full flex-1">
      <span className="ml-[204px] w-12 bg-[#5c5c54]" />
      <span className="ml-[99px] w-12 bg-[#b4682c]" />
    </div>
    <ShieldMarks />
  </div>
);

export default App;
